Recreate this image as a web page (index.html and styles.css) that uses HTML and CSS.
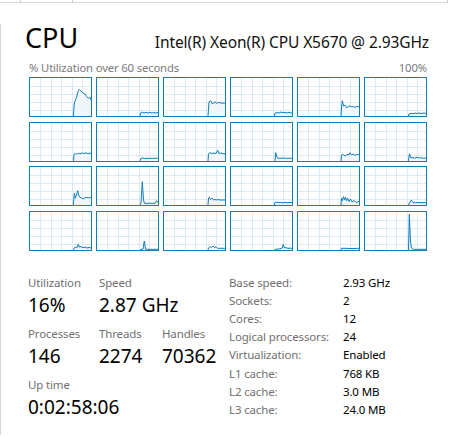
FILE: index.html
```html
<!DOCTYPE html>
<html lang="en">
<head>
<meta charset="utf-8">
<title>CPU</title>
<link rel="stylesheet" href="styles.css">
</head>
<body>
<svg class="defs" width="0" height="0" aria-hidden="true">
  <defs>
    <g id="grid" fill="#d9eaf4">
      <rect x="10" y="0" width="1" height="38"/>
      <rect x="21" y="0" width="1" height="38"/>
      <rect x="31" y="0" width="1" height="38"/>
      <rect x="42" y="0" width="1" height="38"/>
      <rect x="52" y="0" width="1" height="38"/>
      <rect x="0" y="8" width="61" height="1"/>
      <rect x="0" y="16" width="61" height="1"/>
      <rect x="0" y="24" width="61" height="1"/>
      <rect x="0" y="32" width="61" height="1"/>
    </g>
  </defs>
</svg>
<div class="topbar"><span class="tab t1"></span><span class="tab t2"></span><span class="tab t3"></span></div>
<main class="panel">
  <header class="head">
    <h1 class="title">CPU</h1>
    <div class="model">Intel(R) Xeon(R) CPU X5670 @ 2.93GHz</div>
  </header>
  <div class="caption"><span>% Utilization over 60 seconds</span><span>100%</span></div>
  <div class="graphs">
    <div class="cell"><svg width="61" height="38" viewBox="0 0 61 38"><use href="#grid"/><polygon class="area" points="43.3,38 44.3,25 46.7,18.7 48.3,12.7 49.3,11.3 51,13 53.3,15.3 55,16 56.7,18.7 58.3,20.3 60,19.3 61,22 61,38"/><polyline class="line" points="43.3,38 44.3,25 46.7,18.7 48.3,12.7 49.3,11.3 51,13 53.3,15.3 55,16 56.7,18.7 58.3,20.3 60,19.3 61,22"/></svg></div>
    <div class="cell"><svg width="61" height="38" viewBox="0 0 61 38"><use href="#grid"/><polygon class="area" points="43,38 43.5,35 45,34 47,35 49,34.3 51,35 53,34.5 55,35 57,34.6 59,35 61,34.5 61,38"/><polyline class="line" points="43,38 43.5,35 45,34 47,35 49,34.3 51,35 53,34.5 55,35 57,34.6 59,35 61,34.5"/></svg></div>
    <div class="cell"><svg width="61" height="38" viewBox="0 0 61 38"><use href="#grid"/><polygon class="area" points="44,38 45,24 46.7,22.7 48,25.5 49.3,25.3 51,23.8 52.7,25.3 54.5,24.5 56,24.7 58,25.2 61,25 61,38"/><polyline class="line" points="44,38 45,24 46.7,22.7 48,25.5 49.3,25.3 51,23.8 52.7,25.3 54.5,24.5 56,24.7 58,25.2 61,25"/></svg></div>
    <div class="cell"><svg width="61" height="38" viewBox="0 0 61 38"><use href="#grid"/><polygon class="area" points="43.3,38 44,35.3 46,34.5 48,35 50,34 52,34.8 54,34.3 56,35 58,34.2 60,35 61,34.8 61,38"/><polyline class="line" points="43.3,38 44,35.3 46,34.5 48,35 50,34 52,34.8 54,34.3 56,35 58,34.2 60,35 61,34.8"/></svg></div>
    <div class="cell"><svg width="61" height="38" viewBox="0 0 61 38"><use href="#grid"/><polygon class="area" points="43,38 43.5,30 44.3,22.7 45.5,28 47,27 48.5,29.5 49.3,29.7 50.5,28 52,28 54,29 55.5,28.5 57,29.3 59,28.5 61,28.7 61,38"/><polyline class="line" points="43,38 43.5,30 44.3,22.7 45.5,28 47,27 48.5,29.5 49.3,29.7 50.5,28 52,28 54,29 55.5,28.5 57,29.3 59,28.5 61,28.7"/></svg></div>
    <div class="cell"><svg width="61" height="38" viewBox="0 0 61 38"><use href="#grid"/><polygon class="area" points="43.3,38 44,36 46,35.3 48,35.7 50,35 52,35.5 54,35 56,35.6 58,35 61,35.3 61,38"/><polyline class="line" points="43.3,38 44,36 46,35.3 48,35.7 50,35 52,35.5 54,35 56,35.6 58,35 61,35.3"/></svg></div>

    <div class="cell"><svg width="61" height="38" viewBox="0 0 61 38"><use href="#grid"/><polygon class="area" points="43.5,38 44,31.3 45.5,30.5 47,31.5 48.5,30 50,31 52,30 54,30.5 56,29.7 58,31 60,29.8 61,31 61,38"/><polyline class="line" points="43.5,38 44,31.3 45.5,30.5 47,31.5 48.5,30 50,31 52,30 54,30.5 56,29.7 58,31 60,29.8 61,31"/></svg></div>
    <div class="cell"><svg width="61" height="38" viewBox="0 0 61 38"><use href="#grid"/><polygon class="area" points="43,38 44,35.3 46,35 48,35.5 50,35.3 54,35.3 58,35.2 61,35.3 61,38"/><polyline class="line" points="43,38 44,35.3 46,35 48,35.5 50,35.3 54,35.3 58,35.2 61,35.3"/></svg></div>
    <div class="cell"><svg width="61" height="38" viewBox="0 0 61 38"><use href="#grid"/><polygon class="area" points="44,38 44.5,31 46,29.7 48,30.5 50,30 52,30.5 53.7,27.3 55,30.5 57,30 59,30.8 61,30.5 61,38"/><polyline class="line" points="44,38 44.5,31 46,29.7 48,30.5 50,30 52,30.5 53.7,27.3 55,30.5 57,30 59,30.8 61,30.5"/></svg></div>
    <div class="cell"><svg width="61" height="38" viewBox="0 0 61 38"><use href="#grid"/><polygon class="area" points="44,38 44.7,29.7 46,34.5 48,35.3 52,35 56,35.3 61,35.2 61,38"/><polyline class="line" points="44,38 44.7,29.7 46,34.5 48,35.3 52,35 56,35.3 61,35.2"/></svg></div>
    <div class="cell"><svg width="61" height="38" viewBox="0 0 61 38"><use href="#grid"/><polygon class="area" points="43,38 43.5,32 45,31.5 47,33 49,31.5 51,32 52,29.7 53.5,32 55,31 57,32.3 59,31.5 61,32 61,38"/><polyline class="line" points="43,38 43.5,32 45,31.5 47,33 49,31.5 51,32 52,29.7 53.5,32 55,31 57,32.3 59,31.5 61,32"/></svg></div>
    <div class="cell"><svg width="61" height="38" viewBox="0 0 61 38"><use href="#grid"/><polygon class="area" points="43.3,38 44.5,30.7 46,35 48,34.5 50,35.2 52,34.3 54,35 56,34.7 58,35.2 61,35 61,38"/><polyline class="line" points="43.3,38 44.5,30.7 46,35 48,34.5 50,35.2 52,34.3 54,35 56,34.7 58,35.2 61,35"/></svg></div>

    <div class="cell"><svg width="61" height="38" viewBox="0 0 61 38"><use href="#grid"/><polygon class="area" points="43.3,38 44.3,26.3 45.3,31.3 47.7,23.7 48.5,28 50,30.3 51.5,31 53.3,32 55,30.8 56.7,30.3 58.5,31 61,30.3 61,38"/><polyline class="line" points="43.3,38 44.3,26.3 45.3,31.3 47.7,23.7 48.5,28 50,30.3 51.5,31 53.3,32 55,30.8 56.7,30.3 58.5,31 61,30.3"/></svg></div>
    <div class="cell"><svg width="61" height="38" viewBox="0 0 61 38"><use href="#grid"/><polygon class="area" points="43,38 44,36 45.3,14.7 46.5,33 47.5,36.3 52,36.3 58,36.3 59.7,33.7 61,35.5 61,38"/><polyline class="line" points="43,38 44,36 45.3,14.7 46.5,33 47.5,36.3 52,36.3 58,36.3 59.7,33.7 61,35.5"/></svg></div>
    <div class="cell"><svg width="61" height="38" viewBox="0 0 61 38"><use href="#grid"/><polygon class="area" points="44,38 44.5,31 45.5,30.3 46.5,32.5 48,31 49.5,33 51,32.5 52.5,33 54,32.5 56,33 58,33 61,33 61,38"/><polyline class="line" points="44,38 44.5,31 45.5,30.3 46.5,32.5 48,31 49.5,33 51,32.5 52.5,33 54,32.5 56,33 58,33 61,33"/></svg></div>
    <div class="cell"><svg width="61" height="38" viewBox="0 0 61 38"><use href="#grid"/><polygon class="area" points="43.3,38 44,35.3 46,35 48,35.7 50,35.3 52,36 54,35.3 56,35.8 58,35.5 61,35.5 61,38"/><polyline class="line" points="43.3,38 44,35.3 46,35 48,35.7 50,35.3 52,36 54,35.3 56,35.8 58,35.5 61,35.5"/></svg></div>
    <div class="cell"><svg width="61" height="38" viewBox="0 0 61 38"><use href="#grid"/><polygon class="area" points="43,38 43.5,31 44.5,33.5 45.5,29.7 46.5,33 47.5,30 48.5,34 49.5,31 51,34.5 52.5,32 54,35 56,33.5 58,35.5 61,34.5 61,38"/><polyline class="line" points="43,38 43.5,31 44.5,33.5 45.5,29.7 46.5,33 47.5,30 48.5,34 49.5,31 51,34.5 52.5,32 54,35 56,33.5 58,35.5 61,34.5"/></svg></div>
    <div class="cell"><svg width="61" height="38" viewBox="0 0 61 38"><use href="#grid"/><polygon class="area" points="43.3,38 44.5,36 46.3,33 48,35.5 50,35.7 53,35.5 56,35.7 61,35.7 61,38"/><polyline class="line" points="43.3,38 44.5,36 46.3,33 48,35.5 50,35.7 53,35.5 56,35.7 61,35.7"/></svg></div>

    <div class="cell"><svg width="61" height="38" viewBox="0 0 61 38"><use href="#grid"/><polygon class="area" points="43.3,38 44,36.3 46,35 47,35.5 48.3,32.3 49.5,35 51,34.5 53,35.8 55,35 57,36 59,35.5 61,35.8 61,38"/><polyline class="line" points="43.3,38 44,36.3 46,35 47,35.5 48.3,32.3 49.5,35 51,34.5 53,35.8 55,35 57,36 59,35.5 61,35.8"/></svg></div>
    <div class="cell"><svg width="61" height="38" viewBox="0 0 61 38"><use href="#grid"/><polygon class="area" points="43,38 44,37.5 46,37 47.3,29 48.5,37 50,37.3 55,37.3 61,37.3 61,38"/><polyline class="line" points="43,38 44,37.5 46,37 47.3,29 48.5,37 50,37.3 55,37.3 61,37.3"/></svg></div>
    <div class="cell"><svg width="61" height="38" viewBox="0 0 61 38"><use href="#grid"/><polygon class="area" points="44,38 44.5,36 46,34.5 47.5,35.5 49,34 50.5,35.5 52,34.8 53.5,36.3 56,36.3 61,36.3 61,38"/><polyline class="line" points="44,38 44.5,36 46,34.5 47.5,35.5 49,34 50.5,35.5 52,34.8 53.5,36.3 56,36.3 61,36.3"/></svg></div>
    <div class="cell"><svg width="61" height="38" viewBox="0 0 61 38"><use href="#grid"/><polygon class="area" points="43.3,38 44,37.3 48,37 50,36.5 51.3,36 52.3,32.3 53.3,36 55,35.5 57,36.5 59,36 61,36.5 61,38"/><polyline class="line" points="43.3,38 44,37.3 48,37 50,36.5 51.3,36 52.3,32.3 53.3,36 55,35.5 57,36.5 59,36 61,36.5"/></svg></div>
    <div class="cell"><svg width="61" height="38" viewBox="0 0 61 38"><use href="#grid"/><polygon class="area" points="43,38 43.5,36.3 47,36.3 52,36.5 56,36.5 61,36.3 61,38"/><polyline class="line" points="43,38 43.5,36.3 47,36.3 52,36.5 56,36.5 61,36.3"/></svg></div>
    <div class="cell"><svg width="61" height="38" viewBox="0 0 61 38"><use href="#grid"/><polygon class="area" points="43.5,38 44.3,2.3 45.5,30 46.7,36.3 48,37.3 61,37.3 61,38"/><polyline class="line" points="43.5,38 44.3,2.3 45.5,30 46.7,36.3 48,37.3 61,37.3"/></svg></div>
  </div>

  <section class="stats">
    <div class="dyn">
      <div class="item"><div class="lbl">Utilization</div><div class="val">16%</div></div>
      <div class="item wide"><div class="lbl">Speed</div><div class="val">2.87 GHz</div></div>
      <div class="item"><div class="lbl">Processes</div><div class="val">146</div></div>
      <div class="item"><div class="lbl">Threads</div><div class="val">2274</div></div>
      <div class="item"><div class="lbl">Handles</div><div class="val">70362</div></div>
      <div class="item full"><div class="lbl">Up time</div><div class="val">0:02:58:06</div></div>
    </div>
    <dl class="info">
      <dt>Base speed:</dt><dd>2.93 GHz</dd>
      <dt>Sockets:</dt><dd>2</dd>
      <dt>Cores:</dt><dd>12</dd>
      <dt>Logical processors:</dt><dd>24</dd>
      <dt>Virtualization:</dt><dd>Enabled</dd>
      <dt>L1 cache:</dt><dd>768 KB</dd>
      <dt>L2 cache:</dt><dd>3.0 MB</dd>
      <dt>L3 cache:</dt><dd>24.0 MB</dd>
    </dl>
  </section>
</main>
</body>
</html>
```

FILE: styles.css
```css
html, body {
  margin: 0;
  padding: 0;
}

body {
  width: 452px;
  height: 439px;
  overflow: hidden;
  background: #ffffff;
  font-family: "Noto Sans", "Open Sans", sans-serif;
  color: #000000;
}

.defs {
  display: block;
  width: 0;
  height: 0;
  overflow: hidden;
}

.topbar {
  display: flex;
  width: 448px;
  height: 2px;
  border-bottom: 1px solid #dadada;
}

.tab {
  display: block;
  height: 2px;
  border-right: 1px solid #cfcfcf;
}

.t1 { width: 20px; }
.t2 { width: 51px; }
.t3 { flex: 1; }

.panel {
  margin-top: 22px;
  height: 411px;
  box-sizing: border-box;
  border-left: 1px solid #d6d6d6;
  padding-left: 28px;
}

.head {
  display: flex;
  justify-content: space-between;
  align-items: baseline;
  width: 398px;
  margin-top: -1px;
}

.title {
  margin: 0 0 0 -4px;
  font-size: 27px;
  font-weight: 400;
  line-height: 27px;
}

.model {
  font-size: 15.5px;
  letter-spacing: -0.1px;
  line-height: 20px;
  margin-right: -2px;
  color: #111111;
}

.caption {
  display: flex;
  justify-content: space-between;
  width: 398px;
  margin-top: 8px;
  font-size: 11.3px;
  letter-spacing: -0.15px;
  line-height: 16px;
  color: #7a7a7a;
}

.graphs {
  display: grid;
  grid-template-columns: repeat(6, 63px);
  grid-template-rows: repeat(4, 40px);
  column-gap: 4px;
  row-gap: 4.67px;
  width: 398px;
  margin-top: 1px;
}

.cell {
  box-sizing: border-box;
  border: 1px solid #117dbb;
  background: #ffffff;
}

.cell svg {
  display: block;
}

.area {
  fill: #f1f6fa;
  stroke: none;
}

.line {
  fill: none;
  stroke: #117dbb;
  stroke-width: 1;
  stroke-linejoin: round;
}

.stats {
  display: flex;
  margin-top: 24px;
  margin-left: -1px;
}

.dyn {
  width: 201px;
  display: grid;
  grid-template-columns: 71px 63px auto;
  row-gap: 9px;
  align-content: start;
}

.item {
  white-space: nowrap;
}

.wide { grid-column: 2 / span 2; }
.full { grid-column: 1 / span 3; }

.lbl {
  font-size: 11.5px;
  letter-spacing: -0.15px;
  line-height: 16px;
  color: #707070;
}

.val {
  margin-top: 2px;
  font-size: 19px;
  line-height: 24px;
  color: #000000;
}

.info {
  display: grid;
  grid-template-columns: 114px auto;
  margin: -1px 0 0 0;
  font-size: 11.5px;
  letter-spacing: -0.15px;
  line-height: 18px;
  white-space: nowrap;
}

.info dt {
  color: #707070;
}

.info dd {
  margin: 0;
  color: #000000;
}
```
